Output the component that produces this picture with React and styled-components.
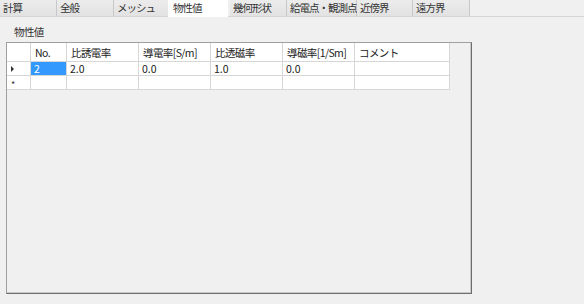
import React from "react";
import styled, { createGlobalStyle } from "styled-components";

const GlobalStyle = createGlobalStyle`
  html, body {
    margin: 0;
    padding: 0;
    background: #f0f0f0;
  }
  body {
    font-family: "Noto Sans CJK JP", "Liberation Sans", sans-serif;
  }
`;

const tabs = [
  { label: "計算", width: 57 },
  { label: "全般", width: 57 },
  { label: "メッシュ", width: 56 },
  { label: "物性値", width: 60, active: true },
  { label: "幾何形状", width: 57 },
  { label: "給電点・観測点", width: 70 },
  { label: "近傍界", width: 56 },
  { label: "遠方界", width: 57 },
];

const columns = [
  { label: "No.", width: 36 },
  { label: "比誘電率", width: 72 },
  { label: "導電率[S/m]", width: 72 },
  { label: "比透磁率", width: 72 },
  { label: "導磁率[1/Sm]", width: 72 },
  { label: "コメント", width: 95 },
];

const rows = [
  { mark: "arrow", values: ["2", "2.0", "0.0", "1.0", "0.0", ""] },
  { mark: "star", values: ["", "", "", "", "", ""] },
];

export default function App() {
  return (
    <Page>
      <GlobalStyle />
      <TabBar>
        {tabs.map((t) => (
          <Tab key={t.label} $width={t.width} $active={t.active}>
            {t.label}
          </Tab>
        ))}
      </TabBar>
      <Content>
        <GroupTitle>物性値</GroupTitle>
        <GroupBox>
          <Grid>
            <HeaderRow>
              <CornerCell />
              {columns.map((c) => (
                <HeaderCell key={c.label} $width={c.width}>
                  {c.label}
                </HeaderCell>
              ))}
            </HeaderRow>
            {rows.map((r, i) => (
              <Row key={i}>
                <RowHeader>
                  {r.mark === "arrow" ? <Arrow /> : <Star>*</Star>}
                </RowHeader>
                {r.values.map((v, j) => (
                  <Cell key={j} $width={columns[j].width} $selected={i === 0 && j === 0}>
                    {v}
                  </Cell>
                ))}
              </Row>
            ))}
          </Grid>
        </GroupBox>
      </Content>
    </Page>
  );
}

const Page = styled.div`
  width: 584px;
  height: 304px;
  background: #f0f0f0;
  font-size: 10.5px;
  letter-spacing: -0.6px;
  color: #222;
  overflow: hidden;
`;

const TabBar = styled.div`
  display: flex;
  height: 17px;
  border-bottom: 1px solid #d4d4d4;
  box-sizing: border-box;
`;

const Tab = styled.div`
  width: ${(p) => p.$width}px;
  box-sizing: border-box;
  height: ${(p) => (p.$active ? "18px" : "16px")};
  margin-top: ${(p) => (p.$active ? "-1px" : "0")};
  margin-left: ${(p) => (p.$active ? "-2px" : "0")};
  margin-right: ${(p) => (p.$active ? "2px" : "0")};
  padding: ${(p) => (p.$active ? "2px 0 0 5px" : "1px 0 0 3px")};
  background: ${(p) =>
    p.$active ? "#ffffff" : "linear-gradient(#ececec, #e2e2e2)"};
  border-right: ${(p) => (p.$active ? "none" : "1px solid #c8c8c8")};
  line-height: 14px;
  letter-spacing: -1px;
  white-space: nowrap;
  color: #333;
  position: relative;
  z-index: ${(p) => (p.$active ? 1 : 0)};
`;

const Content = styled.div`
  padding: 8px 0 0 6px;
`;

const GroupTitle = styled.div`
  margin-left: 8px;
  line-height: 14px;
  height: 17px;
  color: #333;
`;

const GroupBox = styled.div`
  width: 466px;
  height: 252px;
  box-sizing: border-box;
  border: 1px solid #a0a0a0;
  border-right-color: #6e6e6e;
  border-bottom-color: #6e6e6e;
  box-shadow: inset -1px -1px 0 #c8c8c8;
`;

const Grid = styled.div`
  display: flex;
  flex-direction: column;
`;

const HeaderRow = styled.div`
  display: flex;
  height: 19px;
`;

const Row = styled.div`
  display: flex;
  height: 14px;
`;

const CornerCell = styled.div`
  width: 24px;
  box-sizing: border-box;
  background: #ffffff;
  border-right: 1px solid #d6d6d6;
  border-bottom: 1px solid #d6d6d6;
`;

const HeaderCell = styled.div`
  width: ${(p) => p.$width}px;
  box-sizing: border-box;
  background: #ffffff;
  border-right: 1px solid #d6d6d6;
  border-bottom: 1px solid #d6d6d6;
  padding: 3px 0 0 4px;
  line-height: 13px;
  white-space: nowrap;
  overflow: hidden;
  color: #222;
`;

const RowHeader = styled.div`
  width: 24px;
  box-sizing: border-box;
  background: #ffffff;
  border-right: 1px solid #d6d6d6;
  border-bottom: 1px solid #d6d6d6;
  display: flex;
  align-items: center;
  padding-left: 4px;
`;

const Arrow = styled.span`
  width: 0;
  height: 0;
  border-top: 3px solid transparent;
  border-bottom: 3px solid transparent;
  border-left: 3px solid #333;
`;

const Star = styled.span`
  font-size: 9px;
  line-height: 9px;
  color: #333;
  margin-top: 3px;
`;

const Cell = styled.div`
  width: ${(p) => p.$width}px;
  box-sizing: border-box;
  background: ${(p) => (p.$selected ? "#3399ff" : "#ffffff")};
  color: ${(p) => (p.$selected ? "#ffffff" : "#222")};
  border-right: 1px solid #d6d6d6;
  border-bottom: 1px solid #d6d6d6;
  padding-left: 3px;
  line-height: 13px;
  white-space: nowrap;
  letter-spacing: 0;
`;
